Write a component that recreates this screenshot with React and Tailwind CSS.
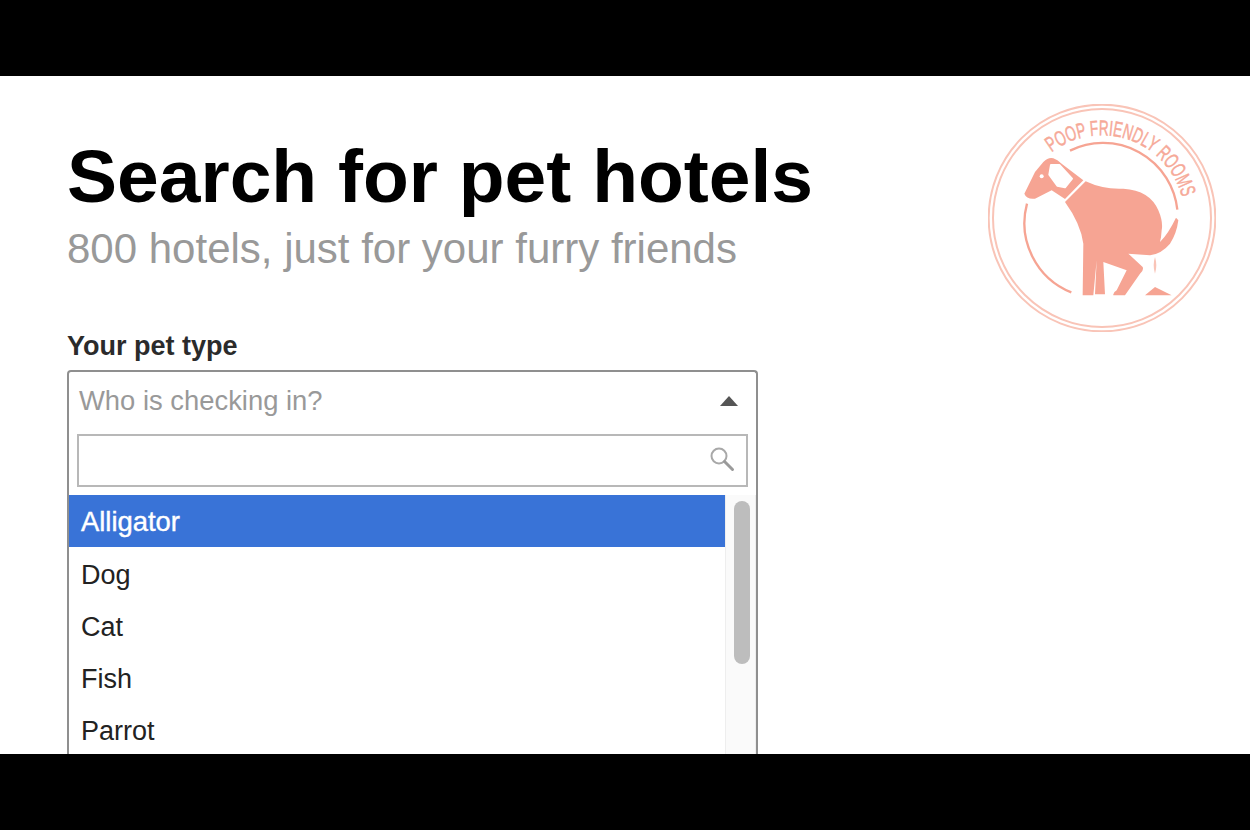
import { useId } from 'react'

const PETS = ['Dog', 'Cat', 'Fish', 'Parrot']

// ─── Badge ─────────────────────────────────────────────────────────────────
function PoopBadge() {
  const arcId = useId()
  return (
    <svg viewBox="0 0 684 684" className="w-[228px] h-[228px] shrink-0" fill="none">
      <g transform="translate(-54 -41)">
        <circle cx="396" cy="383" r="340" stroke="#f9c4b7" strokeWidth="6" />
        <circle cx="396" cy="383" r="327" stroke="#f9c4b7" strokeWidth="6" />
        <path id={arcId} d="M 245 186 A 248 248 0 0 1 636 321" stroke="none" />
        <text fill="#f6a998" stroke="#f6a998" strokeWidth="1.5" fontFamily="'Liberation Sans', sans-serif" fontSize="64" textLength="489" lengthAdjust="spacingAndGlyphs">
          <textPath href={`#${arcId}`}>POOP FRIENDLY ROOMS</textPath>
        </text>
        <path d="M 300 181 A 224 224 0 0 1 622 358" stroke="#f6a493" strokeWidth="7" />
        <path d="M 171 340 A 224 224 0 0 0 304 606" stroke="#f6a493" strokeWidth="7" />
        {/* head */}
        <path d="M 163 310 L 195 245 L 220 215 Q 235 200 250 204 Q 262 208 275 220 L 340 270 L 285 326 L 245 300 L 195 325 Q 170 328 163 310 Z" fill="#f6a493" />
        <path d="M 243 224 L 268 224 L 306 265 L 285 291 L 262 286 L 238 253 Z" fill="#fff" stroke="#fff" strokeWidth="6" strokeLinejoin="round" />
        <circle cx="215" cy="258" r="6" fill="#fff" />
        {/* body, legs and tail */}
        <path d="M 347 273 Q 400 298 460 295 Q 540 300 565 360 Q 580 395 575 420 Q 574 440 570 455 Q 595 430 618 382 L 625 390 Q 620 430 600 460 Q 575 490 540 495 L 475 490 L 518 530 Q 522 540 510 550 L 465 615 H 430 Q 428 607 440 600 L 470 540 L 400 515 L 405 612 H 375 L 380 510 L 370 615 H 338 L 340 460 Q 332 400 285 335 Z" fill="#f6a493" />
        {/* poop */}
        <path d="M 525 615 L 555 590 L 605 615 Z" fill="#f6a493" />
        <path d="M 555 500 Q 563 525 555 550 Q 547 525 555 500 Z" fill="#f9c4b7" />
      </g>
    </svg>
  )
}

function SearchGlyph() {
  return (
    <svg viewBox="0 0 26 26" className="w-[26px] h-[26px]" fill="none">
      <circle cx="10" cy="10" r="7.5" stroke="#a8a8a8" strokeWidth="2" />
      <path d="M 15.5 15.5 L 23.5 23.5" stroke="#9a9a9a" strokeWidth="3" strokeLinecap="round" />
    </svg>
  )
}

// ─── Pet type dropdown ─────────────────────────────────────────────────────
function PetSelect() {
  return (
    <div className="w-[691px] border-2 border-[#8f8f8f] border-b-0 rounded-t-[4px] bg-white">
      <div className="h-[61px] pl-[10px] pr-[18px] pb-[3px] flex items-center justify-between">
        <span className="text-[27.4px] text-[#999]">Who is checking in?</span>
        <span className="w-0 h-0 border-x-[9px] border-x-transparent border-b-[10px] border-b-[#555]" />
      </div>
      <div className="mt-px mx-[8px] h-[53px] border-2 border-[#b8b8b8] flex items-center justify-end pr-[11px] pb-[4px]">
        <SearchGlyph />
      </div>
      <div className="mt-[8px] flex">
        <ul className="flex-1">
          <li className="h-[52px] pl-[12px] pt-[2px] flex items-center bg-[#3973d7] text-white text-[27.4px]" style={{ WebkitTextStroke: '0.4px white' }}>Alligator</li>
          {PETS.map(pet => (
            <li key={pet} className="h-[52px] pl-[12px] pt-[4px] flex items-center text-[27px] text-[#222]">{pet}</li>
          ))}
        </ul>
        <div className="w-[31px] bg-[#fafafa] border-x border-[#eeeeee] pt-[6px] pl-[8px]">
          <div className="w-[16px] h-[163px] rounded-full bg-[#bdbdbd]" />
        </div>
      </div>
    </div>
  )
}

export default function App() {
  return (
    <div className="w-[1250px] h-[830px] bg-black flex flex-col font-['Liberation_Sans',Arial,sans-serif]">
      <div className="h-[76px] shrink-0" />
      <main className="h-[678px] bg-white overflow-hidden pl-[67px] pr-[34px]">
        <header className="flex justify-between pt-[28px]">
          <div className="pt-[28px]">
            <h1 className="text-[75px] leading-[88px] font-bold text-black">Search for pet hotels</h1>
            <p className="mt-[4px] text-[42px] leading-[50px] text-[#999]">800 hotels, just for your furry friends</p>
          </div>
          <PoopBadge />
        </header>
        <label className="block mt-[-2px] mb-[8px] text-[27px] leading-[32px] font-bold text-[#2b2b2b]">Your pet type</label>
        <PetSelect />
      </main>
      <div className="flex-1" />
    </div>
  )
}
